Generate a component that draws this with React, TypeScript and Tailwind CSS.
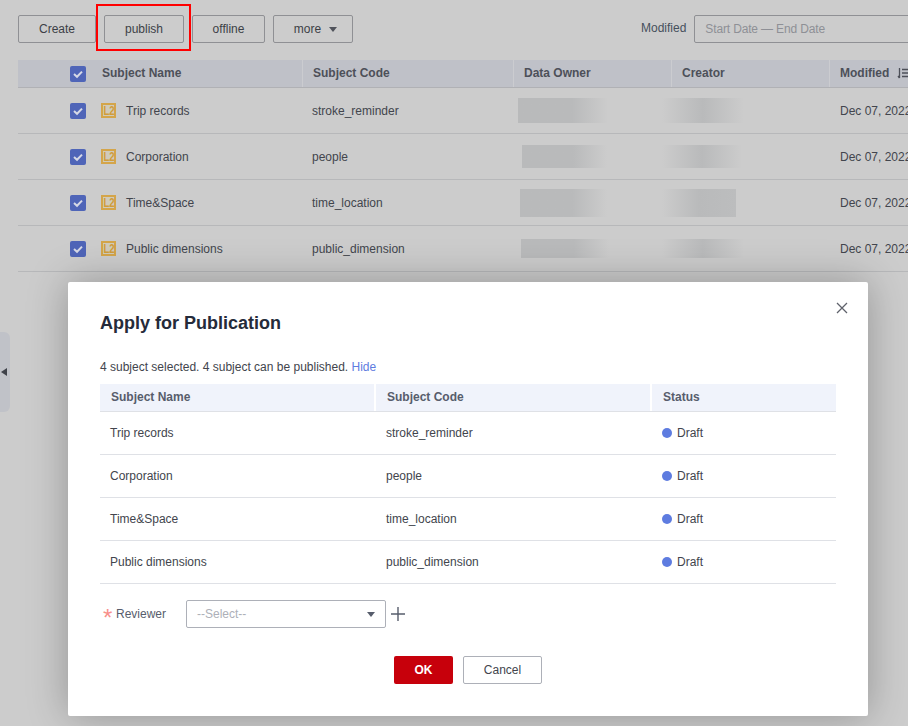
import React from "react";

const rows = [
  { name: "Trip records", code: "stroke_reminder", o: "w-[90px] h-[25px] ml-[-6px]", c: "w-[82px] h-[25px] ml-[-20px]", cs: false },
  { name: "Corporation", code: "people", o: "w-[85px] h-[23px] ml-[-2px]", c: "w-[80px] h-[23px] ml-[-20px]", cs: false },
  { name: "Time&Space", code: "time_location", o: "w-[87px] h-[28px] ml-[-4px]", c: "w-[74px] h-[28px] ml-[-20px]", cs: true },
  { name: "Public dimensions", code: "public_dimension", o: "w-[88px] h-[19px] ml-[-3px]", c: "w-[82px] h-[19px] ml-[-20px]", cs: false },
];

function Check() {
  return (
    <span className="flex h-4 w-4 items-center justify-center rounded-[2px] bg-[#4f65b8]">
      <svg width="12" height="12" viewBox="0 0 12 12" fill="none">
        <path d="M2 6.1 L5 8.8 L10 3.6" stroke="#d6d9e6" strokeWidth="2" />
      </svg>
    </span>
  );
}

function L2() {
  return (
    <span className="flex h-[15px] w-[15px] items-center justify-center border-2 border-[#d4a54a] bg-[#d0cbbb]">
      <span className="scale-x-[0.8] text-[12px] font-bold leading-none text-[#d09c3a]">L2</span>
    </span>
  );
}

function Btn({ w, children }: { w: string; children: React.ReactNode }) {
  return (
    <button className={`flex h-7 items-center justify-center rounded-[2px] border border-[#8f9094] text-xs text-[#3c3f46] ${w}`}>
      {children}
    </button>
  );
}

export default function App() {
  return (
    <div className="relative h-[726px] w-[908px] overflow-hidden bg-[#cccccc] text-xs text-[#42454d] [font-family:'Liberation_Sans',Arial,sans-serif]">
      <div className="flex h-[60px] items-start pl-[18px] pt-[15px]">
        <div className="flex gap-2">
          <Btn w="w-[78px]">Create</Btn>
          <Btn w="w-[80px]">publish</Btn>
          <Btn w="w-[73px]">offline</Btn>
          <Btn w="w-[80px] gap-2 pl-[5px]">
            more
            <svg width="8" height="5" viewBox="0 0 8 5"><path d="M0 0h8L4 5z" fill="#50535b" /></svg>
          </Btn>
        </div>
        <span className="ml-[288px] mt-[5px] leading-4 text-[#46505c]">Modified</span>
        <div className="ml-2 flex h-7 w-[260px] shrink-0 items-center rounded-[2px] border border-[#8f9094] pl-[10px] tracking-[-0.15px] text-[#8e9096]">
          Start Date — End Date
        </div>
      </div>

      <div className="ml-[18px] w-[950px]">
        <div className="flex h-7 border-b border-[#b0b1b5] bg-[#bfc1c8] font-bold text-[#4d5059]">
          <div className="flex w-[285px] items-center border-r border-[#cbccd0]">
            <span className="ml-[52px]"><Check /></span>
            <span className="mb-[1px] ml-4">Subject Name</span>
          </div>
          <div className="flex w-[211px] items-center border-r border-[#cbccd0] pb-[1px] pl-[10px]">Subject Code</div>
          <div className="flex w-[158px] items-center border-r border-[#cbccd0] pb-[1px] pl-[10px]">Data Owner</div>
          <div className="flex w-[158px] items-center border-r border-[#cbccd0] pb-[1px] pl-[10px]">Creator</div>
          <div className="flex items-center gap-2 pb-[1px] pl-[10px]">
            Modified
            <svg width="14" height="12" viewBox="0 0 14 12" fill="none" stroke="#4d5059" strokeWidth="1.3">
              <path d="M2.5 1v10M1 9l1.5 2M5 2.5h9M5 6h9M5 9.5h9" />
            </svg>
          </div>
        </div>
        {rows.map((r) => (
          <div key={r.name} className="flex h-[46px] items-center border-b border-[#b7b8ba]">
            <div className="flex w-[285px] items-center">
              <span className="ml-[52px]"><Check /></span>
              <span className="ml-[15px]"><L2 /></span>
              <span className="ml-[10px]">{r.name}</span>
            </div>
            <div className="w-[211px] pl-[9px]">{r.code}</div>
            <div className="w-[158px] pl-[10px]">
              <div className={`bg-gradient-to-r from-[#b9babb] via-[#b9babb] via-60% to-[#cccccc] ${r.o}`} />
            </div>
            <div className="w-[158px] pl-[10px]">
              <div className={`bg-gradient-to-r from-[#cccccc] via-[#b9babb] via-50% ${r.cs ? "to-[#bcbdbe]" : "to-[#cccccc]"} ${r.c}`} />
            </div>
            <div className="whitespace-nowrap pl-[10px]">Dec 07, 2022</div>
          </div>
        ))}
      </div>

      <div className="absolute left-0 top-[332px] flex h-20 w-[10px] items-center rounded-r-[6px] bg-[#c0c2c8]">
        <svg width="6" height="8" viewBox="0 0 6 8" className="ml-[1px]"><path d="M6 0v8L0 4z" fill="#3f424a" /></svg>
      </div>

      <div className="pointer-events-none absolute left-[96px] top-[4px] h-[47px] w-[95px] border-2 border-[#ff0000]" />

      <div className="absolute left-[68px] top-[282px] h-[434px] w-[800px] rounded-[2px] bg-white px-8 shadow-[0_0_40px_rgba(0,0,0,0.28)]">
        <svg width="12" height="12" viewBox="0 0 12 12" className="absolute right-[20px] top-[20px]" stroke="#5f626b" strokeWidth="1.25" fill="none">
          <path d="M1 1l10 10M11 1L1 11" />
        </svg>
        <h2 className="pt-[30px] text-lg font-bold leading-[22px] text-[#252b3a]">Apply for Publication</h2>
        <p className="mt-[23px] h-[20px] leading-[20px] text-[#42454d]">
          4 subject selected. 4 subject can be published. <span className="text-[#5e7ce0]">Hide</span>
        </p>
        <div className="mt-[7px]">
          <div className="flex h-7 border-b border-[#dfe1e6] bg-[#f0f3fb] font-bold text-[#575d6c]">
            <div className="flex w-[276px] items-center border-r-2 border-white pb-[1px] pl-[11px]">Subject Name</div>
            <div className="flex w-[276px] items-center border-r-2 border-white pb-[1px] pl-[11px]">Subject Code</div>
            <div className="flex flex-1 items-center pb-[1px] pl-[11px]">Status</div>
          </div>
          {rows.map((r) => (
            <div key={r.name} className="flex h-[43px] items-center border-b border-[#dfe1e6]">
              <div className="w-[275px] pl-[10px]">{r.name}</div>
              <div className="w-[276px] pl-[11px]">{r.code}</div>
              <div className="flex flex-1 items-center pl-[11px]">
                <span className="h-[10px] w-[10px] rounded-full bg-[#5e7ce0]" />
                <span className="ml-[5px]">Draft</span>
              </div>
            </div>
          ))}
        </div>
        <div className="mt-4 flex h-7 items-center">
          <span className="ml-[3px] mt-[7px] w-[13px] text-[24px] leading-none text-[#f8908b]">*</span>
          <span className="w-[70px] text-[#575d6c]">Reviewer</span>
          <div className="flex h-7 w-[200px] items-center justify-between rounded-[2px] border border-[#adb0b8] pl-[10px] pr-[10px] text-[#adb0b8]">
            --Select--
            <svg width="8" height="5" viewBox="0 0 8 5"><path d="M0 0h8L4 5z" fill="#575d6c" /></svg>
          </div>
          <svg width="14" height="14" viewBox="0 0 14 14" className="ml-[5px]" stroke="#575d6c" strokeWidth="1.4">
            <path d="M7 0v14M0 7h14" />
          </svg>
        </div>
        <div className="mt-7 flex justify-center gap-[10px]">
          <button className="h-7 w-[59px] rounded-[2px] bg-[#c7000b] font-bold text-white">OK</button>
          <button className="h-7 w-[79px] rounded-[2px] border border-[#adb0b8] text-[#42454d]">Cancel</button>
        </div>
      </div>
    </div>
  );
}
